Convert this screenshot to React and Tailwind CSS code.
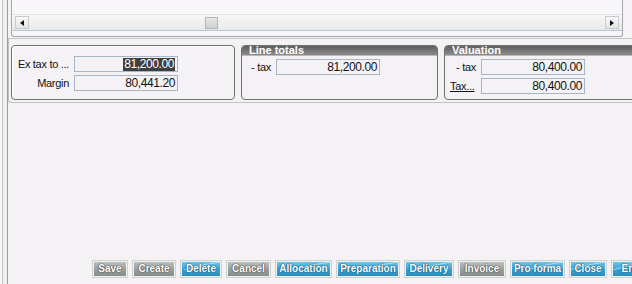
import React from "react";

const sans = { fontFamily: '"Liberation Sans", Arial, sans-serif' };

function Field({ value, selected }) {
  return (
    <div className="h-[16px] border border-[#a7b6c6] bg-[#f4f2f4] flex items-center justify-end pr-[2px] text-[12px] tracking-[-0.4px] leading-none text-[#111]">
      {selected ? (
        <span className="bg-[#3f3f3f] text-white px-[1px] h-[13px] flex items-center">{value}</span>
      ) : (
        <span>{value}</span>
      )}
    </div>
  );
}

function Header({ title }) {
  return (
    <div className="h-[10px] rounded-t-[3px] bg-gradient-to-b from-[#5f5f5f] to-[#8c8c8c] border-b border-[#b9b9b9] flex items-center pl-[7px]">
      <span className="text-white font-bold text-[11px] leading-none">{title}</span>
    </div>
  );
}

function Btn({ label, blue, w }) {
  const base = blue
    ? "bg-gradient-to-b from-[#6fc4e6] via-[#3aa2d2] to-[#2b8cbd]"
    : "bg-gradient-to-b from-[#bcc0c0] via-[#9a9f9f] to-[#878c8c]";
  return (
    <div className="relative h-[18px] shrink-0 border border-[#d0d2d2] p-[1px] bg-[#eef0f0]" style={{ width: w }}>
      <div className={`relative w-full h-full ${base} flex items-center justify-center overflow-hidden`}>
        {blue && (
          <svg className="absolute right-0 top-0" width="40" height="8" viewBox="0 0 40 8">
            <path d="M4 8 C 16 4, 28 2, 40 0" stroke="#c6ebf9" strokeWidth="1" fill="none" opacity="0.7" />
          </svg>
        )}
        <span
          className="relative text-white font-bold text-[10px] leading-none whitespace-nowrap"
          style={{
            textShadow: blue
              ? "0 0 1px #10547a, 0 0 1px #10547a, 0 0 1px #10547a"
              : "0 0 1px #444, 0 0 1px #444, 0 0 1px #444",
          }}
        >
          {label}
        </span>
      </div>
    </div>
  );
}

function Arrow({ dir }) {
  return (
    <div className="w-[14px] h-[13px] border border-[#c9cbd0] bg-gradient-to-b from-[#fafafa] to-[#e4e4e6] flex items-center justify-center">
      <svg width="4" height="6" viewBox="0 0 4 6">
        {dir === "left" ? <path d="M4 0 L0 3 L4 6 Z" fill="#111" /> : <path d="M0 0 L4 3 L0 6 Z" fill="#111" />}
      </svg>
    </div>
  );
}

export default function App() {
  const buttons = [
    ["Save", false, 36],
    ["Create", false, 44],
    ["Delete", true, 42],
    ["Cancel", false, 45],
    ["Allocation", true, 57],
    ["Preparation", true, 64],
    ["Delivery", true, 50],
    ["Invoice", false, 48],
    ["Pro forma", true, 55],
    ["Close", true, 38],
    ["End", true, 40],
  ];
  const label = "text-[11px] leading-none text-[#111] whitespace-nowrap tracking-[-0.3px]";
  return (
    <div className="w-[632px] h-[284px] overflow-hidden bg-[#f5f2f5] flex" style={sans}>
      <div className="w-[2px] shrink-0 bg-[#f7f7f7]" />
      <div className="w-[5px] shrink-0 border-l border-[#c4c4c4] bg-[#f0f0f0]" />
      <div className="flex-1 min-w-0 border-l border-[#9e9e9e] flex flex-col">
        <div className="ml-[3px] mr-[9px] h-[37px] shrink-0 border-x border-b border-[#a4a8ad] rounded-b-[3px] flex flex-col bg-[#f8f6f8]">
          <div className="h-[14px]" />
          <div className="h-[17px] border-t border-[#e3e3e3] border-b border-b-[#b8c7d6] bg-gradient-to-b from-[#f7f7f7] to-[#e9e9ea] flex items-center px-[3px]">
            <Arrow dir="left" />
            <div className="ml-[176px] w-[13px] h-[12px] border border-[#b3b5b9] bg-gradient-to-b from-[#e6e6e9] to-[#cfd0d4]" />
            <div className="flex-1" />
            <Arrow dir="right" />
          </div>
        </div>
        <div className="mt-[1px] h-[1px] bg-[#c6c6c6] shrink-0" />

        <div className="pt-[6px] pl-[2px] pb-[2px] border-b border-l border-[#c2c2c2] rounded-bl-[3px] shrink-0 flex gap-[6px]">
          <div className="w-[224px] h-[55px] shrink-0 border border-[#707070] rounded-[4px] shadow-[inset_1px_1px_0_#ffffff] pt-[10px]">
            <div className="grid grid-cols-[57px_104px] gap-x-[5px] gap-y-[3px] items-center">
              <div className={`${label} text-right`}>Ex tax to ...</div>
              <Field value="81,200.00" selected />
              <div className={`${label} text-right`}>Margin</div>
              <Field value="80,441.20" />
            </div>
          </div>

          <div className="w-[197px] h-[55px] shrink-0 border border-[#707070] rounded-[4px] flex flex-col">
            <Header title="Line totals" />
            <div className="pt-[3px] grid grid-cols-[29px_104px] gap-x-[5px] items-center">
              <div className={`${label} text-right`}>- tax</div>
              <Field value="81,200.00" />
            </div>
          </div>

          <div className="w-[215px] h-[55px] shrink-0 border border-[#707070] rounded-[4px] flex flex-col">
            <Header title="Valuation" />
            <div className="pt-[3px] grid grid-cols-[31px_104px] gap-x-[5px] gap-y-[3px] items-center">
              <div className={`${label} text-right`}>- tax</div>
              <Field value="80,400.00" />
              <div className={`${label} text-left pl-[5px] underline`}>Tax...</div>
              <Field value="80,400.00" />
            </div>
          </div>
        </div>

        <div className="flex-1" />

        <div className="pl-[84px] pb-[6px] flex gap-[4px] shrink-0">
          {buttons.map(([l, b, w]) => (
            <Btn key={l} label={l} blue={b} w={w} />
          ))}
        </div>
      </div>
    </div>
  );
}
